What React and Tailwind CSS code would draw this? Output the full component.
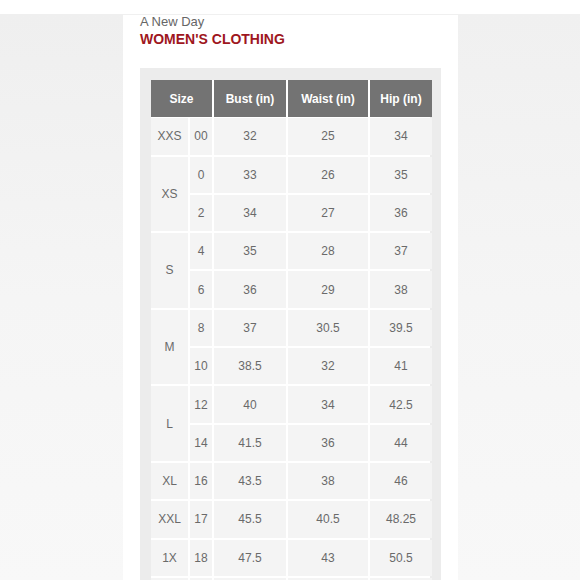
const rows = [
    { label: 'XXS', span: 1, sizes: [['00', '32', '25', '34']] },
    { label: 'XS', span: 2, sizes: [['0', '33', '26', '35'], ['2', '34', '27', '36']] },
    { label: 'S', span: 2, sizes: [['4', '35', '28', '37'], ['6', '36', '29', '38']] },
    { label: 'M', span: 2, sizes: [['8', '37', '30.5', '39.5'], ['10', '38.5', '32', '41']] },
    { label: 'L', span: 2, sizes: [['12', '40', '34', '42.5'], ['14', '41.5', '36', '44']] },
    { label: 'XL', span: 1, sizes: [['16', '43.5', '38', '46']] },
    { label: 'XXL', span: 1, sizes: [['17', '45.5', '40.5', '48.25']] },
    { label: '1X', span: 1, sizes: [['18', '47.5', '43', '50.5']] },
];

const cell = 'flex items-center justify-center bg-[#f4f4f4] text-[12px] text-[#6a6a6a]';
const head = 'flex items-center justify-center bg-[#737373] text-[12px] font-bold text-white';

export default function App() {
    return (
        <div
            className="w-[580px] h-[580px] overflow-hidden bg-white flex flex-col"
            style={{ fontFamily: '"Liberation Sans", Arial, sans-serif' }}
        >
            <div className="h-[14px] shrink-0 bg-white" />
            <div className="flex flex-1 min-h-0">
                {/* Left side */}
                <div className="w-[123px] bg-gradient-to-b from-[#efefef] via-[#f5f5f5] to-[#f8f8f8]" />

                {/* Content panel */}
                <div className="w-[335px] bg-white px-[17px] flex flex-col border-t border-[#f0f0f0]">
                    <p className="text-[13px] leading-[14px] text-[#666666]">A New Day</p>
                    <h1 className="mt-[1px] text-[14px] leading-[18px] font-bold text-[#9e1620]">WOMEN'S CLOTHING</h1>

                    <div className="mt-[20px] flex-1 bg-[#ececec] px-[11px] pt-[12px]">
                        <div className="grid grid-cols-[37px_22px_72px_80px_62px] auto-rows-[36.3px] gap-[2px] bg-white">
                            <div className={`${head} col-span-2 h-[37px]`}>Size</div>
                            <div className={`${head} h-[37px]`}>Bust (in)</div>
                            <div className={`${head} h-[37px]`}>Waist (in)</div>
                            <div className={`${head} h-[37px]`}>Hip (in)</div>

                            {rows.map((r) =>
                                r.sizes.map((s, i) => (
                                    <div key={r.label + s[0]} className="contents">
                                        {i === 0 && (
                                            <div className={`${cell} ${r.span === 2 ? 'row-span-2' : ''}`}>{r.label}</div>
                                        )}
                                        <div className={cell}>{s[0]}</div>
                                        <div className={cell}>{s[1]}</div>
                                        <div className={cell}>{s[2]}</div>
                                        <div className={cell}>{s[3]}</div>
                                    </div>
                                ))
                            )}

                            {/* next row, cut off by the bottom edge */}
                            <div className={cell} />
                            <div className={cell} />
                            <div className={cell} />
                            <div className={cell} />
                            <div className={cell} />
                        </div>
                    </div>
                </div>

                {/* Right side */}
                <div className="flex-1 bg-gradient-to-b from-[#f0f0f0] via-[#f5f5f5] to-[#f8f8f8]" />
            </div>
        </div>
    );
}
